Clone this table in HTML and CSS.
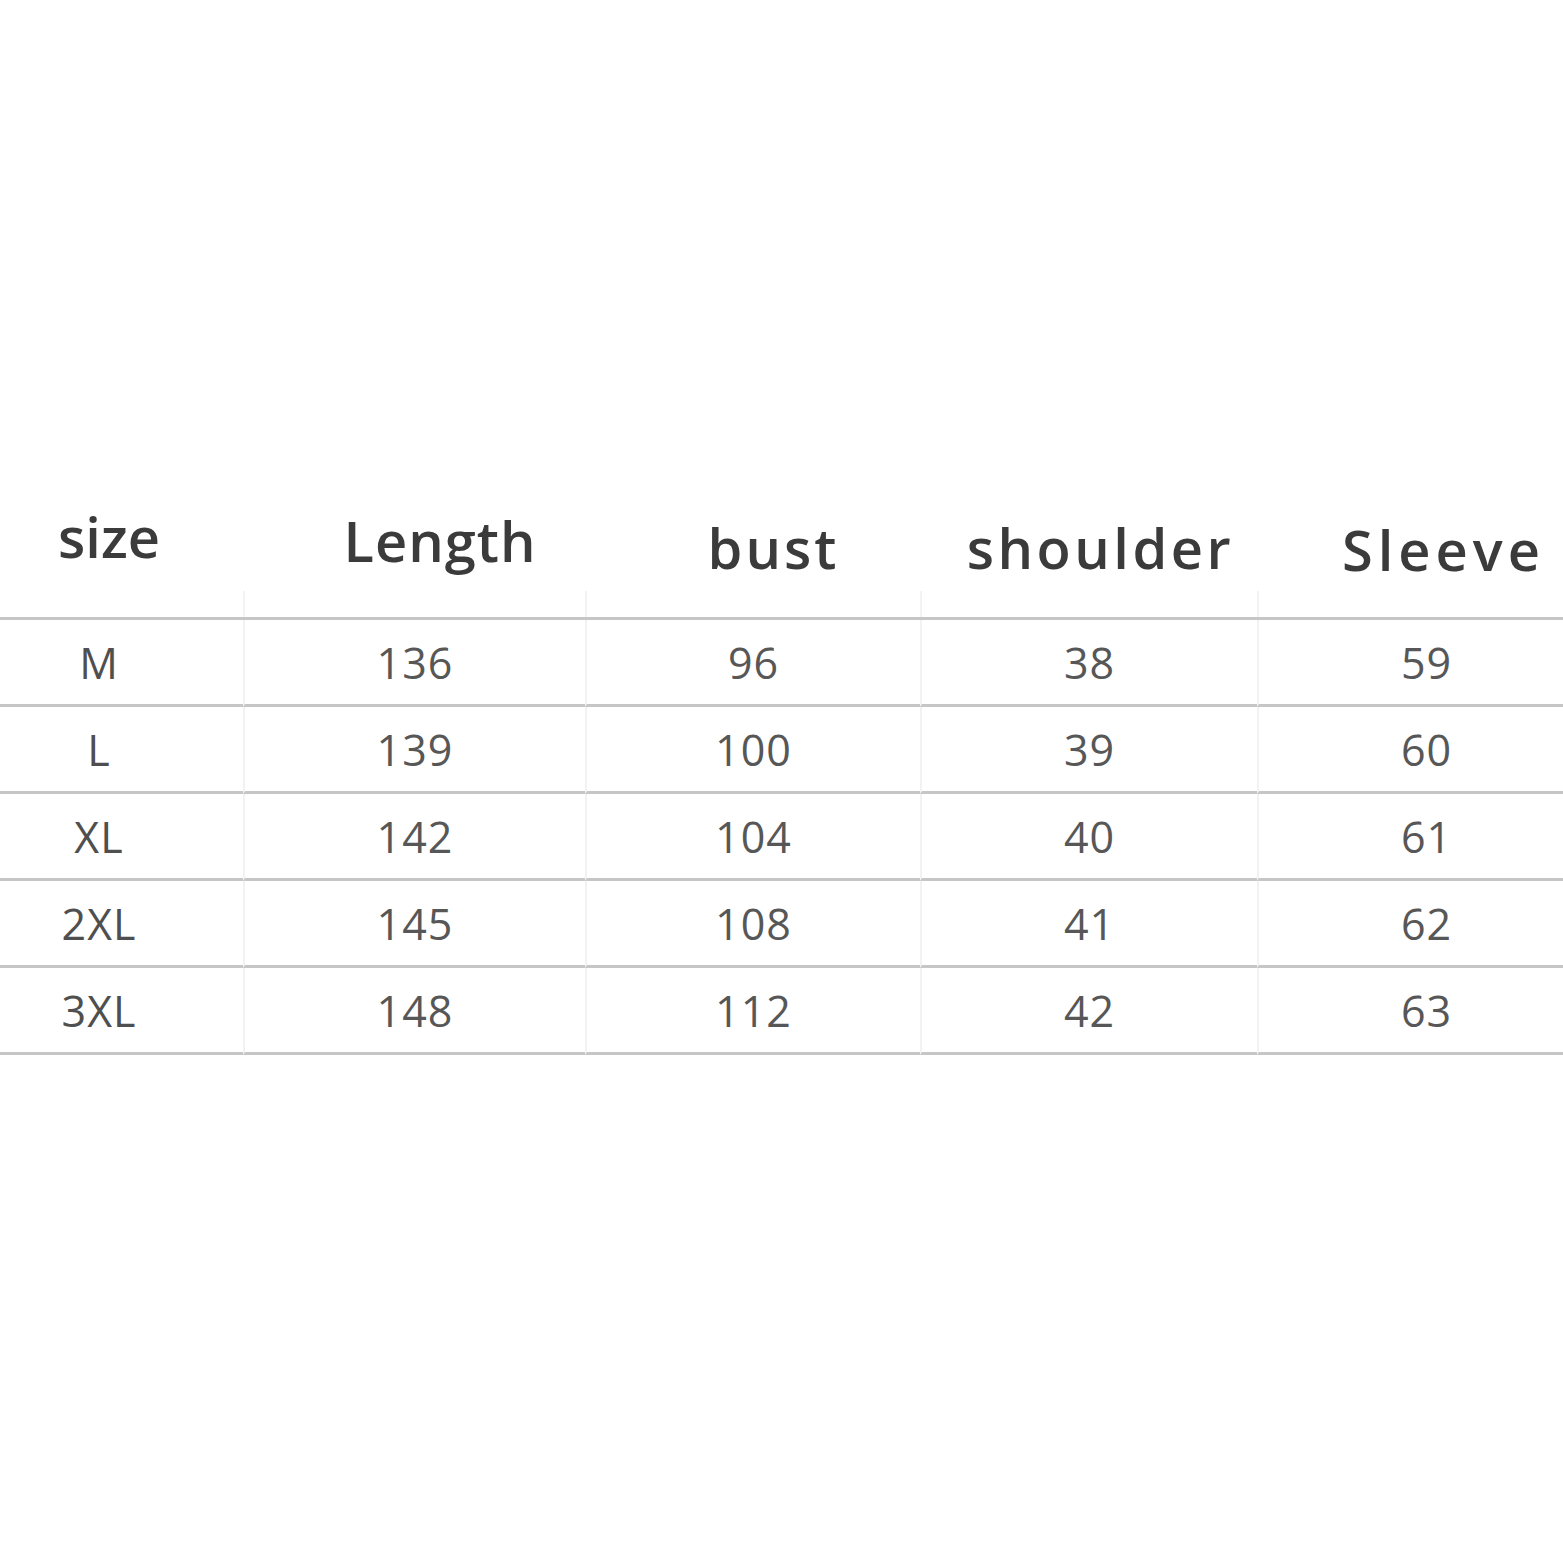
FILE: index.html
```html
<!DOCTYPE html>
<html lang="en">
<head>
<meta charset="utf-8">
<title>Size chart</title>
<link rel="stylesheet" href="styles.css">
</head>
<body>
<main class="page">
  <div class="chart">
    <div class="head head--size">size</div>
    <div class="head head--length">Length</div>
    <div class="head head--bust">bust</div>
    <div class="head head--shoulder">shoulder</div>
    <div class="head head--sleeve">Sleeve</div>

    <div class="cell cell--size">M</div><div class="cell">136</div><div class="cell">96</div><div class="cell">38</div><div class="cell">59</div>
    <div class="cell cell--size">L</div><div class="cell">139</div><div class="cell">100</div><div class="cell">39</div><div class="cell">60</div>
    <div class="cell cell--size">XL</div><div class="cell">142</div><div class="cell">104</div><div class="cell">40</div><div class="cell">61</div>
    <div class="cell cell--size">2XL</div><div class="cell">145</div><div class="cell">108</div><div class="cell">41</div><div class="cell">62</div>
    <div class="cell cell--size">3XL</div><div class="cell">148</div><div class="cell">112</div><div class="cell">42</div><div class="cell">63</div>
  </div>
</main>
</body>
</html>
```

FILE: styles.css
```css
html, body {
  margin: 0;
  padding: 0;
  background: #ffffff;
}

body {
  width: 1563px;
  height: 1563px;
  overflow: hidden;
  font-family: "Open Sans", "Noto Sans", "DejaVu Sans", sans-serif;
}

.page {
  padding-top: 480px;
}

.chart {
  display: grid;
  grid-template-columns: 288px 342px 335px 337px 337px;
  width: max-content;
  margin-left: -45px;
}

.head {
  position: relative;
  box-sizing: border-box;
  height: 140px;
  display: flex;
  align-items: flex-end;
  justify-content: center;
  padding-left: 34px;
  padding-bottom: 42px;
  border-bottom: 3px solid #c6c6c6;
  font-size: 56px;
  line-height: 1;
  font-weight: 600;
  letter-spacing: 4px;
  color: #3b3b3b;
}

/* faint column rule that rises a little above the header line */
.head + .head::before {
  content: "";
  position: absolute;
  left: 0;
  bottom: 0;
  height: 26px;
  border-left: 2px solid #f3f3f3;
}

.head--size {
  padding-left: 20px;
  padding-bottom: 53px;
  letter-spacing: 0;
}

.head--length {
  padding-left: 52px;
  padding-bottom: 49px;
  letter-spacing: 1px;
}

.head--bust {
  padding-left: 42px;
  letter-spacing: 3px;
}

.head--shoulder {
  padding-left: 24px;
  letter-spacing: 3.5px;
}

.head--sleeve {
  padding-left: 36px;
  padding-bottom: 40px;
  letter-spacing: 5px;
}

.cell {
  box-sizing: border-box;
  height: 87px;
  display: flex;
  align-items: center;
  justify-content: center;
  border-bottom: 3px solid #c6c6c6;
  border-left: 2px solid #f2f2f2;
  font-size: 43px;
  line-height: 1;
  letter-spacing: 1px;
  color: #575757;
}

.cell--size {
  border-left: none;
  color: #4f4f4f;
}
```
